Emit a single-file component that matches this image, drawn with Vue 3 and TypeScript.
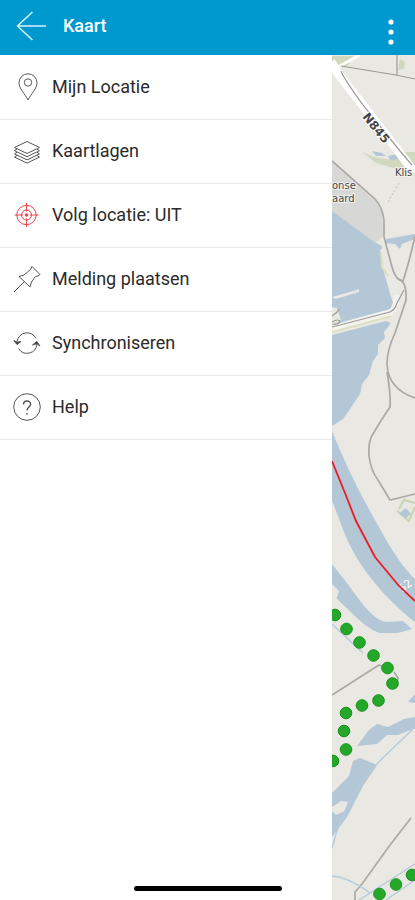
<script setup lang="ts">
import { ref } from 'vue'

type IconName = 'pin' | 'layers' | 'target' | 'pushpin' | 'sync' | 'help'

interface MenuItem {
  icon: IconName
  label: string
}

const following = ref(false)

const items: MenuItem[] = [
  { icon: 'pin', label: 'Mijn Locatie' },
  { icon: 'layers', label: 'Kaartlagen' },
  { icon: 'target', label: 'Volg locatie' },
  { icon: 'pushpin', label: 'Melding plaatsen' },
  { icon: 'sync', label: 'Synchroniseren' },
  { icon: 'help', label: 'Help' },
]

function labelOf(item: MenuItem): string {
  return item.icon === 'target' ? `${item.label}: ${following.value ? 'AAN' : 'UIT'}` : item.label
}

function select(item: MenuItem): void {
  if (item.icon === 'target') following.value = !following.value
}

const route: [number, number][] = [
  [335, 615], [346.5, 629], [359.5, 642.5], [373.5, 655.5], [387.5, 668], [392.5, 683.5],
  [378.5, 700.5], [362, 705.5], [346, 713], [344, 731], [346, 749.5], [333, 761],
  [379.5, 894], [396, 884.5], [412, 875],
]
</script>

<template>
  <div class="screen">
    <header class="bar">
      <button class="bar-button" type="button" aria-label="Terug">
        <svg class="back" viewBox="0 0 32 32">
          <path d="M31 15.500H1.500M17 1L1.500 15.500L17 30" />
        </svg>
      </button>
      <h1 class="title">Kaart</h1>
      <button class="bar-button more" type="button" aria-label="Meer opties">
        <svg class="dots" viewBox="0 0 8 28">
          <circle cx="4" cy="4" r="2.600" />
          <circle cx="4" cy="14" r="2.600" />
          <circle cx="4" cy="24" r="2.600" />
        </svg>
      </button>
    </header>

    <main class="body">
      <nav class="drawer">
        <ul class="menu">
          <li v-for="item in items" :key="item.icon">
            <button class="item" type="button" @click="select(item)">
              <svg class="icon" :class="item.icon" viewBox="0 0 28 28" aria-hidden="true">
                <template v-if="item.icon === 'pin'">
                  <path d="M15 27C12 21 6 15.500 6 9.800A9 9 0 0 1 24 9.800C24 15.500 18 21 15 27Z" />
                  <circle cx="15" cy="9.500" r="3.700" />
                </template>
                <template v-else-if="item.icon === 'layers'">
                  <path d="M1.500 10.500L14 4.500L26.500 10.500L14 16.500Z" />
                  <path d="M4 12L1.500 13.700L14 19.700L26.500 13.700L24 12" />
                  <path d="M4 15.200L1.500 16.900L14 22.900L26.500 16.900L24 15.200" />
                  <path d="M4 18.400L1.500 20.100L14 26.100L26.500 20.100L24 18.400" />
                </template>
                <template v-else-if="item.icon === 'target'">
                  <circle cx="13.500" cy="14" r="9.700" />
                  <circle cx="13.500" cy="14" r="5" />
                  <circle class="solid" cx="13.500" cy="14" r="1.300" />
                  <path d="M13.500 2V10.500M13.500 17.500V26M1.500 14H10M17 14H25.500" />
                </template>
                <template v-else-if="item.icon === 'pushpin'">
                  <path d="M1 27L11.500 16.500M19 1.500L27 9.500L25 11L22.500 11.500L18.500 17L17 22L6 11.500L11 10L17.500 4.500Z" />
                </template>
                <template v-else-if="item.icon === 'sync'">
                  <path d="M4 13A10 10 0 0 1 23 9.500M24 15A10 10 0 0 1 5.500 19.500" />
                  <path class="solid" d="M0.800 11.500L4 15.500L8 12.500L4.300 13.300ZM19.500 16L23.800 12.500L27 17L23.800 14.700Z" />
                </template>
                <template v-else>
                  <circle cx="14" cy="14" r="13.300" />
                  <path class="question" d="M10.500 11.500C10.500 6.800 17.600 6.800 17.600 11.200C17.600 14 14 14 14 17.500M14 20V21.500" />
                </template>
              </svg>
              <span>{{ labelOf(item) }}</span>
            </button>
          </li>
        </ul>
      </nav>

      <svg class="map" viewBox="332 55 83 845" preserveAspectRatio="xMinYMin slice" role="img" aria-label="Kaart">
        <rect class="land" x="332" y="55" width="83" height="845" />
        <g class="park">
          <path d="M332 56H353L348 66L338 68L332 64Z" />
          <path d="M400 59L405 62L404 69L398 70Z" />
          <path d="M362 152L374 157L391 160L403 152H415V172L390 167L376 163Z" />
        </g>
        <path class="estate" d="M332 163L376 202L382 213L383 236L375 244L332 213Z" />
        <g class="water">
          <path d="M372 151L382 153L386 156L376 156ZM388 156L401 153L400 159L390 160Z" />
          <path d="M332 211L354 227L374 242L382 246L381 258L385 274L393 290L397 305L392 313L332 327Z" />
          <path d="M386 239L415 234V239L402 244L400 249L395 244L385 243Z" />
          <path d="M332 335L386 321L391 323L384 332L385 338L378 345V354L373 361L369 375L362 384L360 394L350 409L343 419L332 426Z" />
          <path d="M332 431C343 458 357 489 379 527C391 550 405 570 415 579V622C394 606 369 580 354 553C343 533 338 514 332 501Z" />
          <path d="M332 564L350 587C360 601 373 620 386 622L403 621L412 629L398 633L380 633C363 628 347 606 332 595Z" />
          <path d="M391 600L415 619V610L398 598Z" />
          <path d="M357 746L369 730L377 724L388 727L404 719L415 717V728L398 735L387 735L377 744Z" />
          <path d="M408 702L415 694V703Z" />
          <path d="M332 793L349 776L353 761L360 758L377 765L363 786L347 817L332 837Z" />
        </g>
        <path class="land" d="M380 250L386 246L395 275L408 290L397 312L392 300L385 276Z" />
        <path class="land" d="M332 807L341 801L348 802L345 811L336 815L332 811Z" />
        <path class="land" d="M332 584L339 591L336 600L332 602Z" />
        <path class="land" d="M337 308L341 320L332 325V307ZM332 297L350 292L359 289V292L336 299Z" />
        <g class="verge">
          <path d="M332 332L391 316" />
          <path d="M381 252L382 267L388 276" />
        </g>
        <g class="casing">
          <path d="M332 328L391 312Q396 308 397 295" />
        </g>
        <path class="highway" d="M331 62L340 76L396 148L414 172" />
        <path class="highway thin" d="M336 68L360 55" />
        <g class="track">
          <path d="M341 66L396 75L415 79M397 55V75" />
          <path d="M341 71Q344 79 363 105L400 151L412 165M332 327L390 312Q395 310 397 303L404 290" />
          <path d="M332 322Q339 318 340 322Q338 325 332 324M332 316Q338 312 339 309" />
        </g>
        <g class="road">
          <path d="M332 161L375 199Q383 208 384 221V237L392 267Q396 281 403 281Q409 263 415 236" />
          <path d="M399 279Q407 282 406 300L395 333Q387 350 387 364Q388 389 415 398M387 372Q391 395 390 407Q381 420 373 434Q368 441 369 456Q371 471 378 480L390 500L415 494" />
          <path d="M332 695L379 665L384 667M394 672L398 678L396 688M355 900V892L362 884L390 845L411 818" />
        </g>
        <g class="stream">
          <path d="M332 624L363 653M391 750L415 727M332 848C343 803 363 776 391 750M332 876Q348 877 370 893M359 900L415 864" />
          <path d="M386 900L415 880" />
        </g>
        <path class="footpath" d="M399 183L388 202" />
        <path class="garden" d="M415 503L404 500L399 509M397 511L409 521L415 507" />
        <path class="pond" d="M402 511L406 508L411 514L406 518L399 514Z" />

        <g class="place">
          <text x="332" y="189">onse</text>
          <text x="332" y="202">aard</text>
          <text x="395" y="176">Klis</text>
        </g>
        <text class="road-name" transform="translate(362 117) rotate(51)">N845</text>
        <text class="river-name" transform="translate(402 593) rotate(-38)">52</text>

        <path class="border" d="M332 461L345 493L356 521L375 557L399 586L415 601" />
        <circle v-for="([x, y], i) in route" :key="i" class="stop" :cx="x" :cy="y" r="5.800" />
      </svg>
    </main>

    <div class="home-indicator"></div>
  </div>
</template>

<style>
body {
  margin: 0;
}
</style>

<style scoped>
.screen {
  position: relative;
  display: flex;
  flex-direction: column;
  min-height: 100vh;
  background: #fff;
  color: #2a2a2a;
  font-family: Roboto, "Liberation Sans", sans-serif;
}

button {
  padding: 0;
  border: 0;
  background: none;
  color: inherit;
  font: inherit;
  cursor: pointer;
}

.bar {
  display: flex;
  align-items: center;
  gap: 16px;
  box-sizing: border-box;
  height: 55px;
  padding: 0 20px 3px 16px;
  background: #0099cf;
  color: #fff;
}

.bar-button {
  display: flex;
}

.back {
  width: 31px;
  height: 31px;
  fill: none;
  stroke: #d9f2fb;
  stroke-width: 1.5;
}

.title {
  flex: 1;
  margin: 0;
  font-size: 18px;
  font-weight: 500;
  line-height: 24px;
}

.more {
  padding-top: 12px;
}

.dots {
  width: 8px;
  height: 28px;
  fill: #fff;
}

.body {
  display: flex;
  flex: 1;
}

.drawer {
  flex: 0 0 80%;
}

.menu {
  margin: 0;
  padding: 1px 0 0;
  list-style: none;
}

.item {
  display: flex;
  align-items: center;
  gap: 11px;
  box-sizing: border-box;
  width: 100%;
  height: 64px;
  padding: 0 13px 1px;
  border-bottom: 1px solid #e9e9e9;
  font-size: 18px;
  line-height: 24px;
  text-align: left;
}

.icon {
  flex: none;
  width: 28px;
  height: 28px;
  fill: none;
  stroke: #555;
  stroke-width: 1;
}

.icon .solid {
  fill: #333;
}

.icon.target {
  stroke: #f0444a;
}

.icon.target .solid {
  fill: #f0444a;
}

.question {
  stroke-width: 1.4;
}

.map {
  flex: 1;
  min-width: 0;
  height: calc(100vh - 55px);
  fill: none;
}

.land {
  fill: #e9e8e3;
}

.park {
  fill: #d0d8bd;
}

.estate {
  fill: #d7d8d6;
}

.water,
.pond {
  fill: #b3c7d7;
}

.verge {
  stroke: #d8e0bd;
  stroke-width: 2;
}

.casing {
  stroke: #f3f2ed;
  stroke-width: 6;
}

.highway {
  stroke: #fff;
  stroke-width: 9;
}

.highway.thin {
  stroke-width: 3;
}

.track {
  stroke: #9d9b98;
  stroke-width: 1.2;
}

.road {
  stroke: #aaa9a6;
  stroke-width: 1.7;
}

.stream {
  stroke: #b6cbdc;
  stroke-width: 1.4;
}

.footpath {
  stroke: #bbb;
  stroke-dasharray: 2 2;
}

.garden {
  stroke: #c8d4b1;
  stroke-width: 2;
}

.place {
  fill: #444;
  stroke: #f3f2ef;
  stroke-width: 2px;
  paint-order: stroke;
  font-family: "DejaVu Sans", sans-serif;
  font-size: 10px;
}

.road-name {
  fill: #444;
  stroke: #fff;
  stroke-width: 2px;
  paint-order: stroke;
  font-family: "DejaVu Sans", sans-serif;
  font-size: 12px;
  font-weight: 700;
}

.river-name {
  fill: #fff;
  font-family: "DejaVu Sans", sans-serif;
  font-size: 11px;
}

.border {
  stroke: #ed1c24;
  stroke-width: 1.8;
}

.stop {
  fill: #25a82a;
  stroke: #159219;
  stroke-width: 1;
}

.home-indicator {
  position: absolute;
  bottom: 9px;
  left: 50%;
  width: 148px;
  height: 5px;
  border-radius: 3px;
  background: #000;
  transform: translateX(-50%);
}
</style>
